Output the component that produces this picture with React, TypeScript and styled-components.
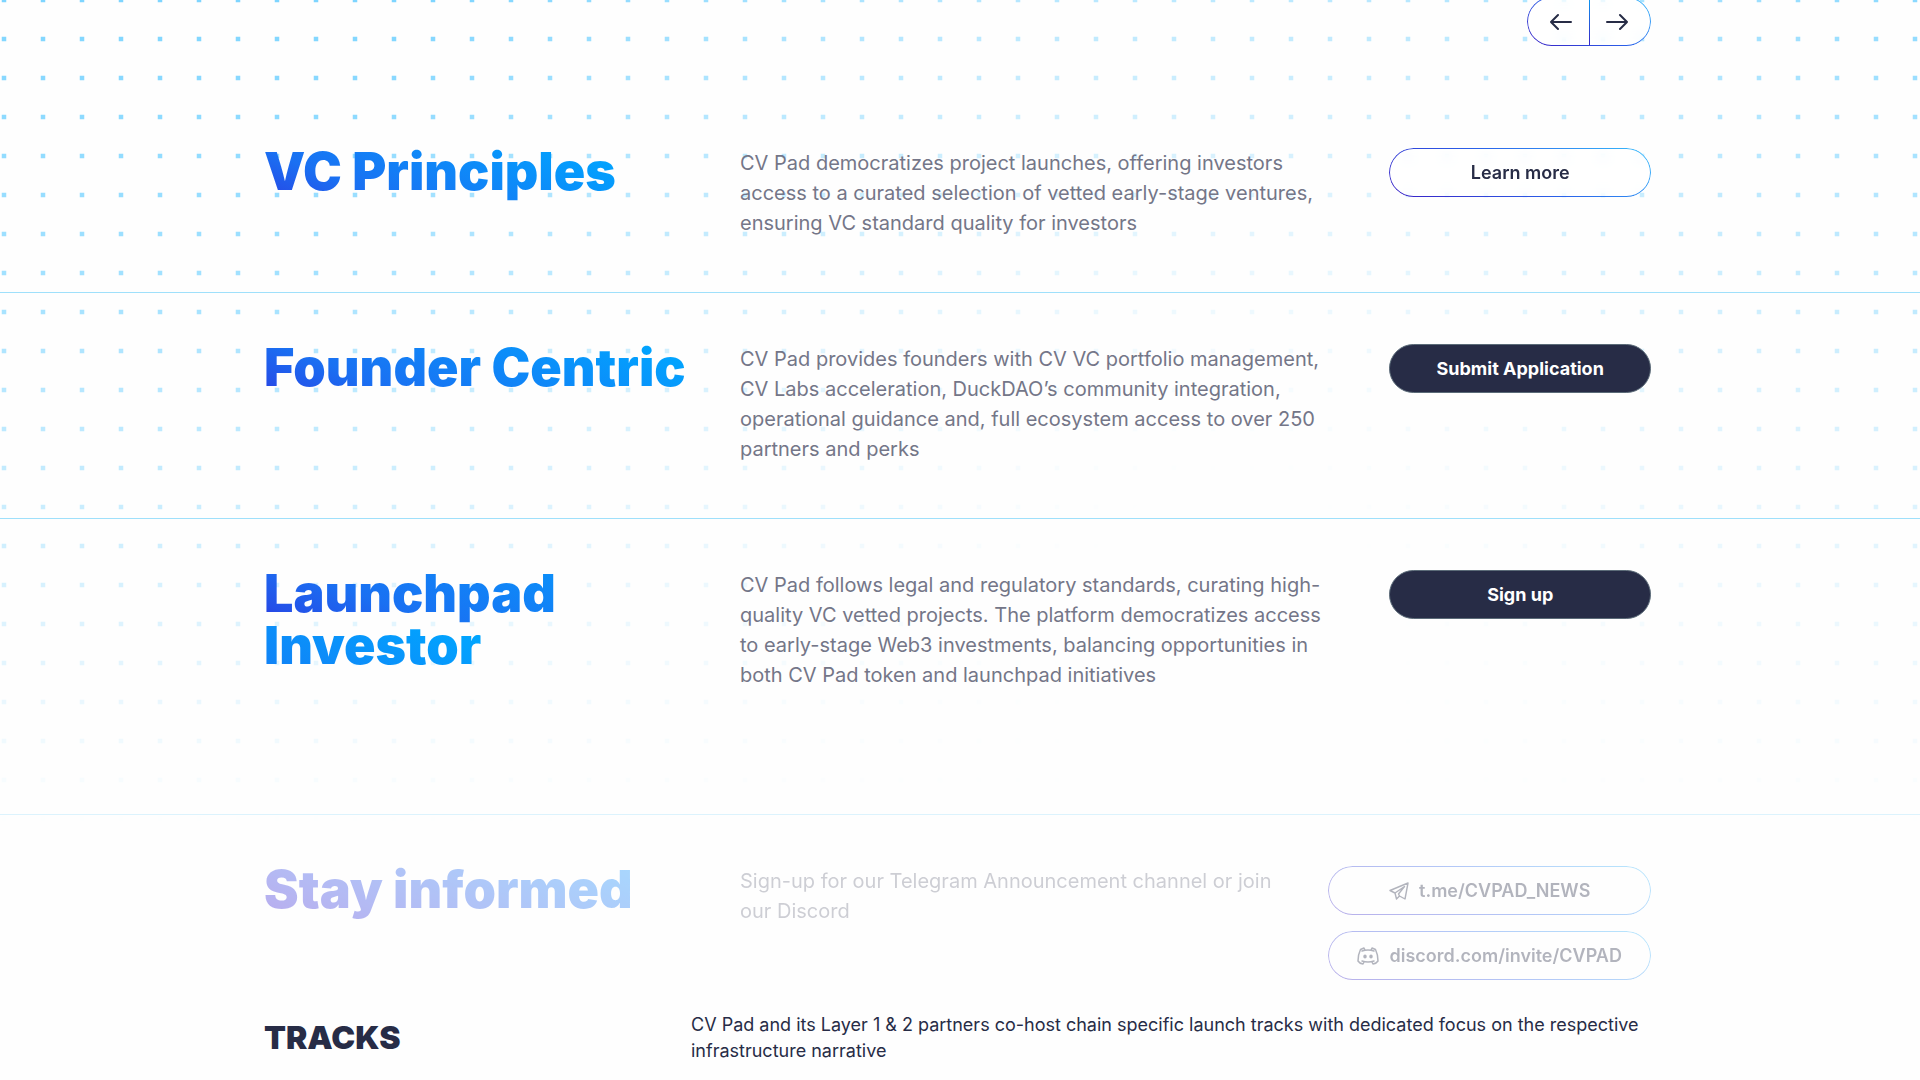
import React from 'react';
import styled, { createGlobalStyle, css } from 'styled-components';

const GlobalStyle = createGlobalStyle`
  *, *::before, *::after { box-sizing: border-box; }
  body {
    margin: 0;
    background: #fefefe;
    color: #272c46;
    font-family: Inter, 'Noto Sans', sans-serif;
    -webkit-font-smoothing: antialiased;
  }
  h2, p { margin: 0; }
`;

const brand = 'linear-gradient(22deg, #2a34de 0%, #2450e8 8%, #1a70f2 26%, #00a6ff 92%)';
const brandDeep = 'linear-gradient(22deg, #3a14d0 0%, #2c3ce0 26%, #0a90ff 96%)';
const rim = 'linear-gradient(30deg, #3a1fc4 0%, #2a62ea 50%, #38bdfc 100%)';
const dotStops = 'rgba(0, 0, 0, 0.25) 0 1px, #000 1px 5px, rgba(0, 0, 0, 0.25) 5px 6px, transparent 6px';

const Page = styled.main`
  position: relative;
  height: 100vh;
  overflow: hidden;
`;

const Dots = styled.div`
  position: absolute;
  inset: 0 0 auto;
  height: 840px;
  z-index: -1;
  background: #7ed5ff;
  mask-image:
    linear-gradient(#000 0%, rgba(0, 0, 0, 0.72) 33%, rgba(0, 0, 0, 0.38) 63%, transparent 98%),
    radial-gradient(ellipse 900px 1000px at 1230px 660px, transparent 18%, #000 110%),
    linear-gradient(90deg, ${dotStops}),
    linear-gradient(${dotStops});
  mask-size: 100% 100%, 100% 100%, 39px 39px, 39px 39px;
  mask-position: 0 0, 0 0, 1px 0, 0 -3px;
  mask-composite: intersect;
`;

const Container = styled.div`
  padding: 0 14% 0 13.75%;
`;

const pill = css`
  position: relative;
  height: 49px;
  border: 0;
  border-radius: 25px;
  background: rgba(255, 255, 255, 0.5);
  backdrop-filter: blur(6px);
`;

const gradientRim = css`
  &::before {
    content: '';
    position: absolute;
    inset: 0;
    padding: 1px;
    border-radius: inherit;
    background: ${rim};
    mask: linear-gradient(#000 0 0) content-box exclude, linear-gradient(#000 0 0);
    pointer-events: none;
  }
`;

const SliderBar = styled(Container)`
  display: flex;
  justify-content: flex-end;
  margin-top: -3px;
`;

const SliderNav = styled.div`
  ${pill}
  ${gradientRim}
  display: flex;
  width: 124px;
  padding: 0 6px;
`;

const ArrowButton = styled.button`
  flex: 1;
  display: grid;
  place-items: center;
  padding: 0;
  border: 0;
  background: none;
  color: #272c46;
  cursor: pointer;
  & + & {
    border-left: 1px solid;
    border-image: linear-gradient(#0aa0f5, #3a1fc4) 1;
  }
`;

const Row = styled.section<{ $muted?: boolean; $last?: boolean; $first?: boolean }>`
  padding: ${(p) => (p.$first ? 102 : 51)}px 0 ${(p) => (p.$last ? 124 : p.$muted ? 32 : 54)}px;
  border-top: ${(p) => (p.$first ? 0 : 1)}px solid #9fe0fb;
  opacity: ${(p) => (p.$muted ? 0.35 : 1)};
`;

const RowGrid = styled(Container)`
  display: grid;
  grid-template-columns: 476px minmax(0, 1fr) auto;
  align-items: start;
`;

const Title = styled.h2`
  max-width: 440px;
  margin-top: -2px;
  font-size: 52px;
  line-height: 52px;
  font-weight: 900;
`;

const TitleInk = styled.span<{ $deep?: boolean }>`
  color: transparent;
  background: ${(p) => (p.$deep ? brandDeep : brand)};
  background-clip: text;
`;

const Copy = styled.p`
  max-width: 620px;
  padding-right: 24px;
  font-size: 20px;
  line-height: 30px;
  color: #747688;
`;

const Actions = styled.div<{ $wide?: boolean }>`
  display: grid;
  gap: 16px;
  width: ${(p) => (p.$wide ? 323 : 262)}px;
`;

const buttonText = css`
  display: flex;
  align-items: center;
  justify-content: center;
  gap: 10px;
  font-family: inherit;
  font-size: 18px;
  line-height: 24px;
  font-weight: 600;
  cursor: pointer;
`;

const OutlineButton = styled.button`
  ${pill}
  ${gradientRim}
  ${buttonText}
  color: #272c46;
`;

const OutlineLink = styled.a`
  ${pill}
  ${gradientRim}
  ${buttonText}
  color: #272c46;
  text-decoration: none;
`;

const SolidButton = styled.button`
  ${pill}
  ${buttonText}
  background: #272c46;
  border: 1px solid #5b6b78;
  color: #fff;
  font-weight: 700;
`;

const Tracks = styled(Container)`
  display: grid;
  grid-template-columns: 427px minmax(0, 1fr);
  align-items: center;
`;

const TracksTitle = styled.h2`
  font-size: 32px;
  line-height: 40px;
  font-weight: 900;
`;

const TracksCopy = styled.p`
  font-size: 18px;
  line-height: 26px;
`;

const Arrow = ({ flip }: { flip?: boolean }) => (
  <svg width="22" height="18" viewBox="0 0 22 18" fill="none" stroke="currentColor" strokeWidth="2" strokeLinecap="round" strokeLinejoin="round" aria-hidden="true">
    {flip ? <path d="M1 9h20M14 2l7 7-7 7" /> : <path d="M21 9H1M8 2L1 9l7 7" />}
  </svg>
);

const TelegramIcon = () => (
  <svg width="20" height="18" viewBox="0 0 20 18" fill="none" stroke="currentColor" strokeWidth="1.4" strokeLinecap="round" strokeLinejoin="round" aria-hidden="true">
    <path d="M19 1 1 8.500l5 2.500 1.500 6 3-3 5.500 3L19 1ZM6 11l9.500-6.500-6 7.500 1 2" />
  </svg>
);

const DiscordIcon = () => (
  <svg width="22" height="18" viewBox="0 0 22 18" fill="none" stroke="currentColor" strokeWidth="1.5" strokeLinecap="round" strokeLinejoin="round" aria-hidden="true">
    <path d="M5 4c4-1.300 8-1.300 12 0M5 14c4 1.300 8 1.300 12 0M8 3 7 1 3.500 2.500C1.800 6 1 9.500 1 14c1 1.600 2.500 2.500 5 3l1-2M14 3l1-2 3.500 1.500C20.200 6 21 9.500 21 14c-1 1.600-2.500 2.500-5 3l-1-2" />
    <ellipse cx="8" cy="9.500" rx="1" ry="1.300" fill="currentColor" />
    <ellipse cx="14" cy="9.500" rx="1" ry="1.300" fill="currentColor" />
  </svg>
);

export default function App() {
  return (
    <>
      <GlobalStyle />
      <Page>
        <Dots />
        <SliderBar>
          <SliderNav>
            <ArrowButton aria-label="Previous"><Arrow /></ArrowButton>
            <ArrowButton aria-label="Next"><Arrow flip /></ArrowButton>
          </SliderNav>
        </SliderBar>

        <Row $first>
          <RowGrid>
            <Title><TitleInk>VC Principles</TitleInk></Title>
            <Copy>
              CV Pad democratizes project launches, offering investors access to a curated selection of vetted
              early-stage ventures, ensuring VC standard quality for investors
            </Copy>
            <Actions><OutlineButton>Learn more</OutlineButton></Actions>
          </RowGrid>
        </Row>

        <Row>
          <RowGrid>
            <Title><TitleInk>Founder Centric</TitleInk></Title>
            <Copy>
              CV Pad provides founders with CV VC portfolio management, CV Labs acceleration, DuckDAO’s community
              integration, operational guidance and, full ecosystem access to over 250 partners and perks
            </Copy>
            <Actions><SolidButton>Submit Application</SolidButton></Actions>
          </RowGrid>
        </Row>

        <Row $last>
          <RowGrid>
            <Title><TitleInk>Launchpad Investor</TitleInk></Title>
            <Copy>
              CV Pad follows legal and regulatory standards, curating high-quality VC vetted projects. The platform
              democratizes access to early-stage Web3 investments, balancing opportunities in both CV Pad token and
              launchpad initiatives
            </Copy>
            <Actions><SolidButton>Sign up</SolidButton></Actions>
          </RowGrid>
        </Row>

        <Row $muted>
          <RowGrid>
            <Title><TitleInk $deep>Stay informed</TitleInk></Title>
            <Copy>Sign-up for our Telegram Announcement channel or join our Discord</Copy>
            <Actions $wide>
              <OutlineLink href="#telegram"><TelegramIcon />t.me/CVPAD_NEWS</OutlineLink>
              <OutlineLink href="#discord"><DiscordIcon />discord.com/invite/CVPAD</OutlineLink>
            </Actions>
          </RowGrid>
        </Row>

        <Tracks>
          <TracksTitle>TRACKS</TracksTitle>
          <TracksCopy>
            CV Pad and its Layer 1 &amp; 2 partners co-host chain specific launch tracks with dedicated focus on the
            respective infrastructure narrative
          </TracksCopy>
        </Tracks>
      </Page>
    </>
  );
}
